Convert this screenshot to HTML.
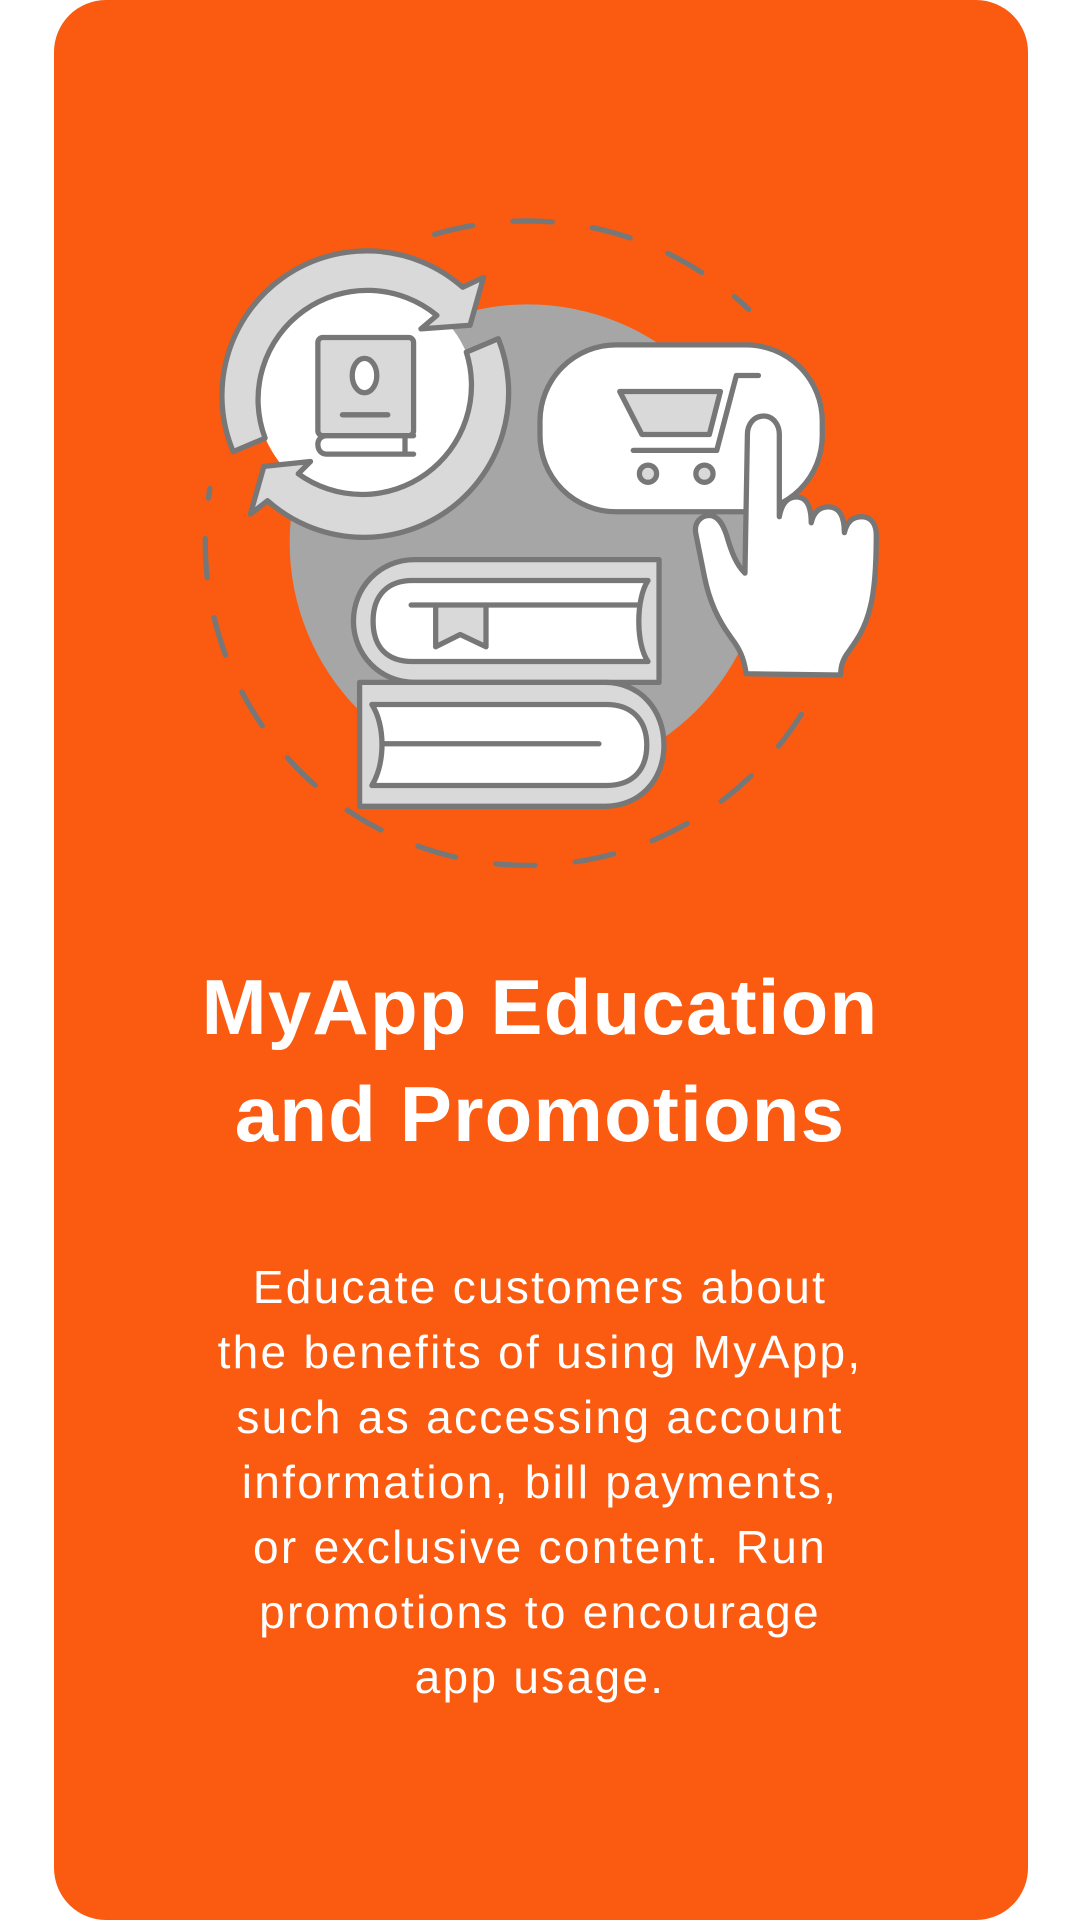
<!DOCTYPE html>
<html><head><meta charset="utf-8"><style>
html,body{margin:0;padding:0;background:#fff;}
body{width:1080px;height:1920px;position:relative;overflow:hidden;font-family:"Liberation Sans",sans-serif;}
.card{position:absolute;left:54px;top:0;width:974px;height:1920px;background:#fa5b10;border-radius:52px;}
svg{position:absolute;left:0;top:0;}
.t{position:absolute;left:0;width:1080px;text-align:center;color:#fff;white-space:nowrap;}
.h{top:954px;font-size:78px;line-height:107px;font-weight:bold;letter-spacing:1.2px;}
.p{top:1255px;font-size:46px;line-height:65px;letter-spacing:2.3px;}
</style></head><body>
<div class="card"></div>
<svg width="1080" height="1920" viewBox="0 0 880 1564.44">
<g stroke="#777" stroke-width="4.3" stroke-linejoin="round" stroke-linecap="round">
<path d="M653,582 A263,263 0 0 1 171,398" fill="none" stroke-dasharray="32 33"/>
<path d="M354,191 A263,263 0 0 1 610,252" fill="none" stroke-dasharray="32 33"/>
<circle cx="430" cy="442" r="194" fill="#a6a6a6" stroke="none"/>
<circle cx="298" cy="322" r="89" fill="#fff" stroke="none"/>
<path d="M190,368 A118,118 0 0 1 377,234 L394,226 L383,265 L343,268 L356,257 A89,89 0 0 0 216,357 Z" fill="#d9d9d9"/>
<path d="M380,287 L406,276 A118,118 0 0 1 218,408 L204,419 L215,380 L253,376 L243,386 A89,89 0 0 0 380,287 Z" fill="#d9d9d9"/>
<rect x="259" y="275" width="78" height="80" rx="4" fill="#d9d9d9"/>
<ellipse cx="297" cy="306" rx="10" ry="14" fill="#fff"/>
<path d="M279,338 H316" fill="none"/>
<path d="M337,355 H266 C262,355 259,358 259,362 C259,367 262,370 266,370 H337 M330,355 V370" fill="#fff"/>
<rect x="440" y="281" width="230" height="136" rx="62" fill="#fff"/>
<path d="M505,319 H587 L578,354 H523 Z" fill="#d9d9d9"/>
<path d="M516,367 H584 L600,306 H618" fill="none"/>
<circle cx="528" cy="386" r="7" fill="#d9d9d9"/>
<circle cx="574" cy="386" r="7" fill="#d9d9d9"/>
<path d="M608,549 C606,535 602,528 596,520 C585,505 578,490 574,470 L567,435 C565,425 572,420 578,420 C585,420 589,427 592,436 C596,450 600,460 607,467 L609,354 C609,346 614,339 622,339 C630,339 635,346 635,354 L635,421 C637,410 642,405 649,405 C656,405 661,411 661,426 C663,417 668,413 675,413 C682,413 688,418 688,434 C690,425 695,421 702,421 C709,421 714,426 714,436 C714,460 713,480 709,495 C705,512 698,522 690,533 C686,539 685,544 685,550 Z" fill="#fff"/>
<path d="M537,456 H338 C309,456 288,479 288,506 C288,533 309,556 338,556 H537 Z" fill="#d9d9d9"/>
<path d="M528,473 H336 C316,473 304,485 304,506 C304,528 316,539 336,539 H528 C518,525 518,488 528,473 Z" fill="#fff"/>
<path d="M355,493 V527 L375,517 L396,527 V493" fill="#d9d9d9"/>
<path d="M335,493 H520" fill="none"/>
<path d="M293,556 H493 C521,556 541,578 541,607 C541,636 521,657 493,657 H293 Z" fill="#d9d9d9"/>
<path d="M303,574 H494 C516,574 527,588 527,607 C527,627 516,640 494,640 H303 C314,622 314,591 303,574 Z" fill="#fff"/>
<path d="M312,606 H488" fill="none"/>
</g>
</svg>
<div class="t h">MyApp Education<br>and Promotions</div>
<div class="t p">Educate customers about<br>the benefits of using MyApp,<br>such as accessing account<br>information, bill payments,<br>or exclusive content. Run<br>promotions to encourage<br>app usage.</div>
</body></html>
